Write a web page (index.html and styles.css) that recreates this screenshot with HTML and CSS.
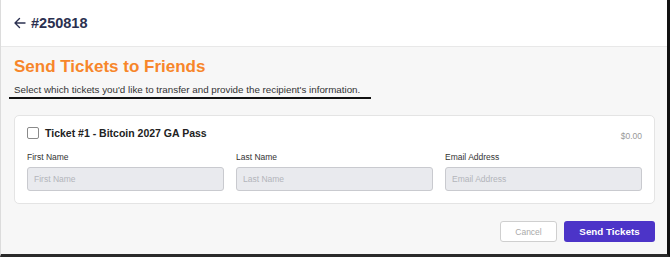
FILE: index.html
```html
<!DOCTYPE html>
<html>
<head>
<meta charset="utf-8">
<link rel="stylesheet" href="styles.css">
</head>
<body>
<div class="frame">
  <header class="topbar">
    <svg class="back" width="12" height="12" viewBox="0 0 12 12"><path d="M11 6H1.5M5.5 1.5L1 6l4.5 4.5" fill="none" stroke="#2b3050" stroke-width="1.4" stroke-linecap="round" stroke-linejoin="round"/></svg>
    <span class="order">#250818</span>
  </header>
  <main class="content">
    <h1 class="title">Send Tickets to Friends</h1>
    <p class="subtitle">Select which tickets you'd like to transfer and provide the recipient's information.</p>
    <section class="card">
      <div class="card-head">
        <label class="ticket"><span class="check"></span><span class="ticket-name">Ticket #1 - Bitcoin 2027 GA Pass</span></label>
        <span class="price">$0.00</span>
      </div>
      <div class="fields">
        <div class="field"><span class="label">First Name</span><div class="input">First Name</div></div>
        <div class="field"><span class="label">Last Name</span><div class="input">Last Name</div></div>
        <div class="field"><span class="label">Email Address</span><div class="input">Email Address</div></div>
      </div>
    </section>
    <div class="actions">
      <button class="btn cancel">Cancel</button>
      <button class="btn send">Send Tickets</button>
    </div>
  </main>
</div>
</body>
</html>
```
FILE: styles.css
```css
* { box-sizing: border-box; }
html, body { margin: 0; padding: 0; }
body { font-family: "Liberation Sans", Arial, sans-serif; background: #f7f7f7; }
.frame {
  width: 670px; height: 257px;
  border-left: 1px solid #dcdcdc;
  border-right: 3px solid #111;
  border-bottom: 3px solid #2a2a2a;
  background: #f7f7f7;
  overflow: hidden;
}
.topbar {
  height: 47px; background: #fff;
  border-bottom: 1px solid #e8e8e8;
  display: flex; align-items: center;
  padding-left: 13px; padding-bottom: 1px; gap: 5px;
}
.back { display: block; }
.order { font-size: 14.5px; font-weight: bold; color: #2b3050; }
.content { padding: 10px 0 0 13px; }
.title { margin: 0; font-size: 17px; font-weight: bold; color: #f7862a; line-height: 20px; }
.subtitle {
  margin: 7px 0 0 -5px; padding: 0 0 1px 5px;
  font-size: 9.8px; color: #333; line-height: 12px;
  width: 362px;
  border-bottom: 2px solid #111;
}
.card {
  margin-top: 16px;
  background: #fff; border: 1px solid #e4e4e4; border-radius: 5px;
  width: 641px; height: 89px;
  padding: 11px 12px 0 12px;
}
.card-head { display: flex; justify-content: space-between; align-items: center; height: 12px; }
.ticket { display: flex; align-items: center; gap: 6px; }
.check { width: 12px; height: 12px; border: 1px solid #8a8a8a; border-radius: 2px; background: #fff; }
.ticket-name { font-size: 10.5px; font-weight: bold; color: #222; }
.price { font-size: 8.5px; color: #999; margin-top: 6px; }
.fields { display: grid; grid-template-columns: 197px 197px 197px; column-gap: 12px; margin-top: 13px; }
.field { display: flex; flex-direction: column; gap: 4px; }
.label { font-size: 8.5px; color: #333; line-height: 11px; }
.input {
  height: 24px; background: #e9eaee; border: 1px solid #c9cacf; border-radius: 3px;
  font-size: 8.5px; color: #b3b5bb; padding-left: 6px; display: flex; align-items: center;
}
.actions { display: flex; justify-content: flex-end; gap: 7px; width: 641px; margin-top: 17px; }
.btn { font-family: inherit; border-radius: 3px; height: 21px; padding: 0; }
.cancel { width: 57px; background: #fff; border: 1px solid #cfcfcf; color: #aaa; font-size: 8.5px; }
.send { width: 91px; background: #4c34c8; border: none; color: #fff; font-weight: bold; font-size: 9.8px; }
```
